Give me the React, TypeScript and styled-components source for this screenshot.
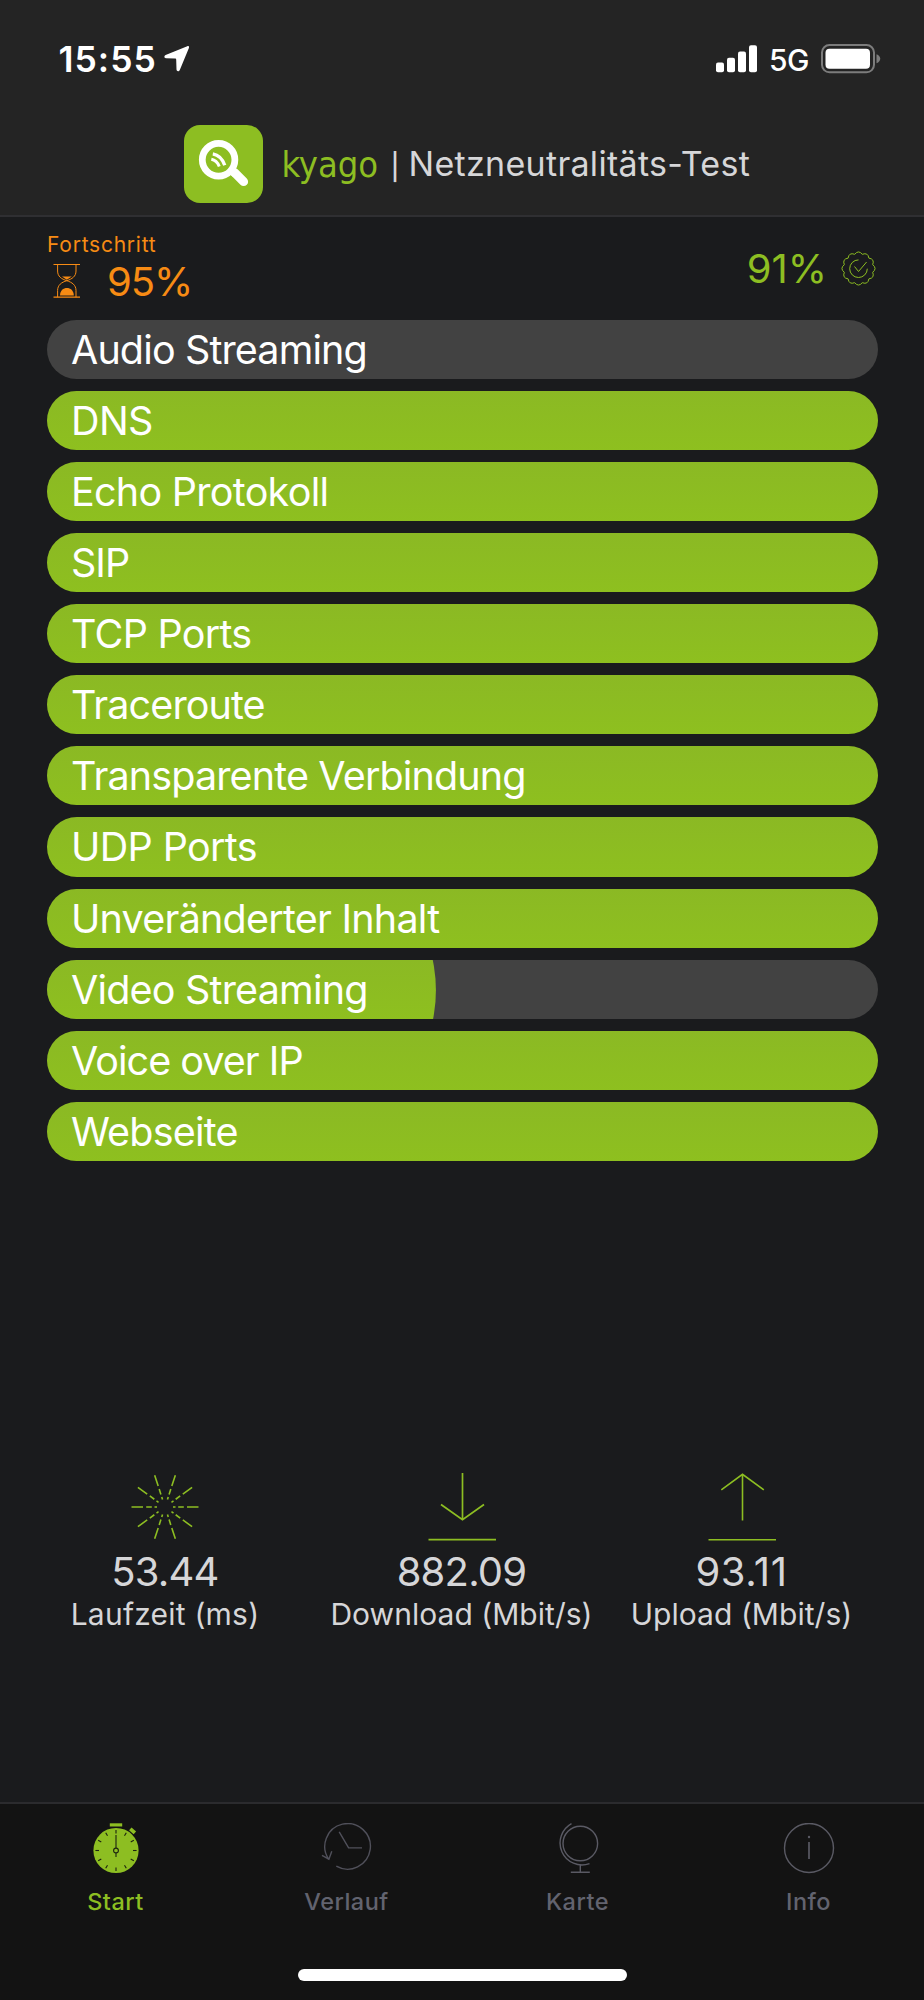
import React from "react";
import styled, { createGlobalStyle } from "styled-components";

const GREEN = "#8dbe22";
const ORANGE = "#f78b14";
const LIGHT = "#d6d6d8";

const GlobalStyle = createGlobalStyle`
  body {
    margin: 0;
    background: #1a1b1d;
    font-family: Inter, "Liberation Sans", sans-serif;
  }
`;

const Screen = styled.div`
  width: 924px;
  height: 2000px;
  display: flex;
  flex-direction: column;
  background: #1a1b1d;
  color: ${LIGHT};
  overflow: hidden;
  white-space: nowrap;
`;

const TopArea = styled.header`
  box-sizing: border-box;
  height: 217px;
  background: #242424;
  border-bottom: 2px solid #2f2f32;
`;

const StatusBar = styled.div`
  box-sizing: border-box;
  height: 118px;
  padding: 0 43px 0 58.5px;
  display: flex;
  align-items: center;
  justify-content: space-between;
  color: #fff;
`;

const StatusGroup = styled.div`
  display: flex;
  align-items: center;
`;

const Clock = styled.span`
  width: 105px;
  font-size: 35.5px;
  font-weight: 600;
  letter-spacing: 1px;
`;

const Network = styled.span`
  margin: 2px 12px 0 11.5px;
  font-size: 30px;
  font-weight: 500;
  letter-spacing: -0.5px;
`;

const Brand = styled.div`
  height: 92px;
  padding-left: 184px;
  display: flex;
  align-items: center;
`;

const Logo = styled.div`
  width: 78.5px;
  height: 78.5px;
  border-radius: 16px;
  background: ${GREEN};
`;

const BrandName = styled.span`
  width: 108px;
  margin-left: 19px;
  padding-top: 1px;
  color: ${GREEN};
  font-family: "DejaVu Sans Condensed", "DejaVu Sans", sans-serif;
  font-stretch: condensed;
  font-weight: 200;
  font-size: 36px;
  letter-spacing: -0.1px;
`;

const Divider = styled.span`
  width: 3px;
  height: 30px;
  margin: 5px 12px 0 4px;
  font-size: 26px;
  font-weight: 500;
  line-height: 30px;
  text-indent: -3px;
`;

const Title = styled.h1`
  margin: -1px 0 0;
  font-size: 34px;
  font-weight: 400;
  letter-spacing: 0.3px;
`;

const Summary = styled.section`
  box-sizing: border-box;
  height: 103px;
  padding: 15px 48px 0 47px;
  display: flex;
  justify-content: space-between;
`;

const Progress = styled.div`
  color: ${ORANGE};
`;

const ProgressLabel = styled.div`
  height: 24px;
  line-height: 25px;
  font-size: 21px;
  letter-spacing: 0.75px;
`;

const ProgressRow = styled.div`
  height: 50px;
  padding-left: 6px;
  display: flex;
  align-items: center;
  gap: 26px;
`;

const Percent = styled.span<{ $spacing: number }>`
  font-size: 40px;
  letter-spacing: ${(p) => p.$spacing}px;
`;

const Score = styled.div`
  height: 73px;
  display: flex;
  align-items: center;
  gap: 14px;
  color: ${GREEN};
`;

const TestList = styled.ul`
  list-style: none;
  margin: 0;
  padding: 0 46px 0 47px;
  display: flex;
  flex-direction: column;
  gap: 12px;
`;

const TestBar = styled.li`
  display: grid;
  height: 59.07px;
  border-radius: 30px;
  overflow: hidden;
  background: #424242;
`;

const TestFill = styled.div<{ $partial: boolean }>`
  grid-area: 1 / 1;
  background: linear-gradient(#8bb924, #8ec01f);
  clip-path: ${(p) => (p.$partial ? "ellipse(100% 238px at 0 50%)" : "none")};
`;

const TestName = styled.span<{ $spacing: number }>`
  grid-area: 1 / 1;
  z-index: 1;
  padding-left: 24px;
  line-height: 61.4px;
  font-size: 39.5px;
  color: #fff;
  letter-spacing: ${(p) => p.$spacing}px;
`;

const Stats = styled.section`
  flex: 1;
  padding-top: 311px;
  display: grid;
  grid-template-columns: 330px 263px 297px;
  align-content: start;
`;

const Stat = styled.div`
  display: flex;
  flex-direction: column;
  align-items: center;
`;

const StatValue = styled.div<{ $spacing: number }>`
  height: 42px;
  margin-top: 9px;
  line-height: 42px;
  font-size: 40px;
  letter-spacing: ${(p) => p.$spacing}px;
`;

const StatLabel = styled.div<{ $spacing: number }>`
  height: 42px;
  line-height: 42px;
  font-size: 30px;
  letter-spacing: ${(p) => p.$spacing}px;
`;

const TabBar = styled.nav`
  box-sizing: border-box;
  height: 198px;
  padding-top: 19px;
  display: grid;
  grid-template-columns: repeat(4, 1fr);
  grid-template-rows: 110px auto;
  background: #131313;
  border-top: 2px solid #2b2b2e;
`;

const Tab = styled.div<{ $active?: boolean }>`
  display: flex;
  flex-direction: column;
  align-items: center;
  color: ${(p) => (p.$active ? GREEN : "#62636f")};
`;

const TabLabel = styled.span`
  margin-top: 11px;
  line-height: 32px;
  font-size: 23.5px;
  font-weight: 500;
  letter-spacing: 0.5px;
`;

const HomeIndicator = styled.div`
  grid-column: 1 / -1;
  justify-self: center;
  width: 329px;
  height: 12px;
  margin-top: 36px;
  border-radius: 6px;
  background: #fff;
`;

const LocationArrow = () => (
  <svg width="26" height="28" viewBox="0 0 26 28" fill="#fff">
    <path d="M23.3 1.3C24.5.7 25.4 1.6 24.9 2.9L15.8 24.9C15 26.8 12.7 26.6 12.5 24.6L12.2 14.6C12.2 13.8 11.8 13.4 11 13.4L2 13.2C0 13-.2 10.8 1.6 10Z" />
  </svg>
);

const Signal = () => (
  <svg width="42" height="28" viewBox="0 0 42 28" fill="#fff">
    <rect x="0" y="17.5" width="8" height="9.8" rx="2" />
    <rect x="11" y="12.7" width="8" height="14.6" rx="2" />
    <rect x="22" y="6.5" width="8" height="20.8" rx="2" />
    <rect x="33" y="0.3" width="8" height="27" rx="2" />
  </svg>
);

const Battery = () => (
  <svg width="60" height="30" viewBox="0 0 60 30">
    <rect x="1" y="1" width="52" height="27.3" rx="7.5" fill="none" stroke="#7c7c7c" strokeWidth="2" />
    <rect x="4.5" y="4.7" width="44.5" height="20" rx="4" fill="#fff" />
    <path d="M55.5 10.2C60.5 12 60.5 17.5 55.5 19.2Z" fill="#7c7c7c" />
  </svg>
);

const MagnifierMark = () => (
  <svg width="78.5" height="78.5" viewBox="0 0 79 79" fill="none" stroke="#fff">
    <circle cx="34.8" cy="35" r="16.4" strokeWidth="6.8" />
    <path d="M46 45L51 50" strokeWidth="6" />
    <path d="M51 48L60 57" strokeWidth="9" strokeLinecap="round" strokeLinejoin="round" />
    <path d="M29 29Q37.5 30.5 41 40.5" strokeWidth="3.4" />
    <path d="M27.5 34.5Q33 35.5 35.5 41.7" strokeWidth="3" />
  </svg>
);

const Hourglass = () => (
  <svg width="28" height="36" viewBox="0 0 28 36" fill="none" stroke={ORANGE} strokeWidth="1">
    <path d="M.5 1.5H27M.5 34.2H27" strokeWidth="1.2" />
    <path d="M4.6 1.5V8C4.6 13.5 8.5 16 13.8 17.7C19 16 23 13.5 23 8V1.5" />
    <path d="M4.6 34.2V27.5C4.6 22 8.5 19.3 13.8 17.7C19 19.3 23 22 23 27.5V34.2" />
    <path d="M9 13.5H18.8L13.8 16.8Z" fill={ORANGE} stroke="none" />
    <path d="M7 32.5C7 22.6 20.8 22.6 20.8 32.5Z" fill={ORANGE} stroke="none" />
  </svg>
);

const sealPath = (() => {
  const lobes = 12;
  const point = (r: number, i: number) => {
    const a = ((i * 180) / lobes - 90) * (Math.PI / 180);
    return `${(17.5 + r * Math.cos(a)).toFixed(2)} ${(17.5 + r * Math.sin(a)).toFixed(2)}`;
  };
  let d = `M${point(14.7, -1)}`;
  for (let i = 0; i < lobes; i++) {
    d += `Q${point(18.9, i * 2)} ${point(14.7, i * 2 + 1)}`;
  }
  return d + "Z";
})();

const Seal = () => (
  <svg width="35" height="35" viewBox="0 0 35 35" fill="none" stroke={GREEN} strokeWidth="1">
    <path d={sealPath} strokeLinejoin="round" />
    <path d="M17.5 8.9A8.8 8.8 0 1 0 26.3 17.7" />
    <path d="M13.5 15.5L17.5 20.5L25.6 11" />
  </svg>
);

const Burst = () => (
  <svg width="70" height="70" viewBox="-35 -35 70 70" stroke={GREEN} strokeWidth="1.6">
    {Array.from({ length: 10 }, (_, i) => (
      <path key={i} d="M8 0H10.5M13.2 0H18.8M22 0H33.5" transform={`rotate(${i * 36})`} />
    ))}
  </svg>
);

const DownArrow = () => (
  <svg width="70" height="70" viewBox="0 0 70 70" fill="none" stroke={GREEN} strokeWidth="1.7">
    <path d="M35.5 1V48M14 32.5L35.5 47.8L57 32.5M1.5 67.7H69" />
  </svg>
);

const UpArrow = () => (
  <svg width="70" height="70" viewBox="0 0 70 70" fill="none" stroke={GREEN} strokeWidth="1.6">
    <path d="M35.5 2V48.5M14.3 17.8L35.5 2.3L56.8 17.8M1.5 67.7H69" />
  </svg>
);

const Stopwatch = () => (
  <svg width="52" height="52" viewBox="-26 -27.5 52 52">
    <rect x="-6.2" y="-27.2" width="12.4" height="3.2" fill={GREEN} />
    <rect x="-3" y="-1.9" width="6" height="3.8" fill={GREEN} transform="translate(16.6 -19.6) rotate(41)" />
    <circle r="22.6" fill={GREEN} />
    <g stroke="#1c2410" strokeWidth="1.1" fill="none">
      {Array.from({ length: 12 }, (_, i) => (
        <path key={i} d="M0 -20.6V-17" transform={`rotate(${i * 30})`} />
      ))}
      <path d="M0 -15.5V-2.4M0 2.4V6.5" />
      <circle r="2.4" />
    </g>
  </svg>
);

const HistoryIcon = () => (
  <svg width="52" height="52" viewBox="0 0 52 52" fill="none" stroke="#50505a" strokeWidth="1.4">
    <path d="M15.3 43.2A22.8 22.8 0 1 0 7.8 36.3" />
    <path d="M1 32.3L7.9 36.2L10.8 28.3M18.2 8.8L27.6 24.9H41" />
  </svg>
);

const GlobeIcon = () => (
  <svg width="52" height="52" viewBox="0 0 52 52" fill="none" stroke="#5a5a64" strokeWidth="1.4">
    <circle cx="28.3" cy="20.5" r="17.3" />
    <path d="M19.5 .6A22 22 0 0 0 37.5 40.6M28.3 42.3V49M18.8 49.3H37.8" />
  </svg>
);

const InfoIcon = () => (
  <svg width="52" height="52" viewBox="0 0 52 52" fill="none" stroke="#5a5a64" strokeWidth="1.4">
    <circle cx="26" cy="25" r="24.5" />
    <path d="M26 19V36" strokeWidth="1.7" />
    <circle cx="26" cy="14" r="1.2" fill="#5a5a64" stroke="none" />
  </svg>
);

const tests: { name: string; value: number; spacing: number }[] = [
  { name: "Audio Streaming", value: 0, spacing: -0.87 },
  { name: "DNS", value: 100, spacing: -0.6 },
  { name: "Echo Protokoll", value: 100, spacing: -0.72 },
  { name: "SIP", value: 100, spacing: -1 },
  { name: "TCP Ports", value: 100, spacing: -0.75 },
  { name: "Traceroute", value: 100, spacing: -0.9 },
  { name: "Transparente Verbindung", value: 100, spacing: -0.86 },
  { name: "UDP Ports", value: 100, spacing: -0.65 },
  { name: "Unveränderter Inhalt", value: 100, spacing: -0.77 },
  { name: "Video Streaming", value: 46.8, spacing: -0.8 },
  { name: "Voice over IP", value: 100, spacing: -0.98 },
  { name: "Webseite", value: 100, spacing: -0.8 },
];

const stats = [
  { icon: <Burst />, value: "53.44", spacing: -0.8, label: "Laufzeit (ms)", labelSpacing: 0.22 },
  { icon: <DownArrow />, value: "882.09", spacing: -0.8, label: "Download (Mbit/s)", labelSpacing: 0.03 },
  { icon: <UpArrow />, value: "93.11", spacing: 0.6, label: "Upload (Mbit/s)", labelSpacing: 0.04 },
];

const tabs = [
  { icon: <Stopwatch />, label: "Start", active: true },
  { icon: <HistoryIcon />, label: "Verlauf" },
  { icon: <GlobeIcon />, label: "Karte" },
  { icon: <InfoIcon />, label: "Info" },
];

export default function App() {
  return (
    <Screen>
      <GlobalStyle />
      <TopArea>
        <StatusBar>
          <StatusGroup>
            <Clock>15:55</Clock>
            <LocationArrow />
          </StatusGroup>
          <StatusGroup>
            <Signal />
            <Network>5G</Network>
            <Battery />
          </StatusGroup>
        </StatusBar>
        <Brand>
          <Logo>
            <MagnifierMark />
          </Logo>
          <BrandName>kyago</BrandName>
          <Divider>|</Divider>
          <Title>Netzneutralitäts-Test</Title>
        </Brand>
      </TopArea>
      <Summary>
        <Progress>
          <ProgressLabel>Fortschritt</ProgressLabel>
          <ProgressRow>
            <Hourglass />
            <Percent $spacing={-1}>95%</Percent>
          </ProgressRow>
        </Progress>
        <Score>
          <Percent $spacing={0}>91%</Percent>
          <Seal />
        </Score>
      </Summary>
      <TestList>
        {tests.map((t) => (
          <TestBar key={t.name}>
            <TestFill $partial={t.value < 100} style={{ width: `${t.value}%` }} />
            <TestName $spacing={t.spacing}>{t.name}</TestName>
          </TestBar>
        ))}
      </TestList>
      <Stats>
        {stats.map((s) => (
          <Stat key={s.label}>
            {s.icon}
            <StatValue $spacing={s.spacing}>{s.value}</StatValue>
            <StatLabel $spacing={s.labelSpacing}>{s.label}</StatLabel>
          </Stat>
        ))}
      </Stats>
      <TabBar>
        {tabs.map((t) => (
          <Tab key={t.label} $active={t.active}>
            {t.icon}
            <TabLabel>{t.label}</TabLabel>
          </Tab>
        ))}
        <HomeIndicator />
      </TabBar>
    </Screen>
  );
}
